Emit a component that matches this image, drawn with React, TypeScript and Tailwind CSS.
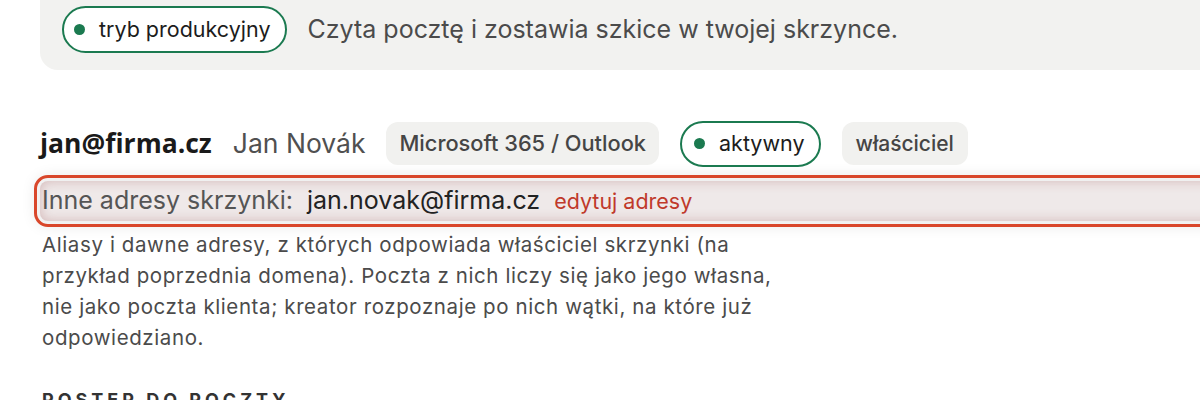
import { useState } from 'react'

function Dot() {
  return <span className="inline-block w-[11px] h-[11px] rounded-full bg-[#1b7a50] shrink-0" />
}

export default function App() {
  const [aliases] = useState(['jan.novak@firma.cz'])

  return (
    <div className="w-[1200px] h-[400px] overflow-hidden bg-white font-['Inter','Noto_Sans',sans-serif]">
      <div className="w-[1280px] pl-[40px]">
        {/* status bar */}
        <div className="h-[70px] bg-[#f2f2f0] rounded-bl-[18px] pl-[22px] pt-[6px] flex items-start gap-[20px]">
          <span className="h-[47px] flex items-center gap-[14px] pl-[10px] pr-[15px] border-2 border-[#1b7a50] rounded-full bg-white text-[21.5px] text-[#1c1c1c]">
            <Dot />
            tryb produkcyjny
          </span>
          <span className="h-[47px] flex items-center text-[25px] text-[#4b4b4b]">
            Czyta pocztę i zostawia szkice w twojej skrzynce.
          </span>
        </div>

        {/* account row */}
        <div className="mt-[50px] h-[47px] flex items-center gap-[21px]">
          <span className="font-['Open_Sans',sans-serif] font-bold text-[26.5px] text-[#1a1a1a]">jan@firma.cz</span>
          <span className="text-[26.5px] text-[#505050]">Jan Novák</span>
          <span className="h-[43px] px-[13px] flex items-center rounded-[12px] bg-[#f1f1ef] text-[21.8px] font-medium text-[#454545]">
            Microsoft 365 / Outlook
          </span>
          <span className="h-[46px] flex items-center gap-[14px] pl-[12px] pr-[14px] border-2 border-[#1b7a50] rounded-full bg-white text-[21.5px] text-[#1c1c1c]">
            <Dot />
            aktywny
          </span>
          <span className="h-[43px] px-[14px] flex items-center rounded-[12px] bg-[#f1f1ef] text-[21px] font-medium text-[#454545]">
            właściciel
          </span>
        </div>

        {/* aliases */}
        <div className="mt-[14px] h-[40px] flex items-center gap-[14px] pl-[2px] rounded-[8px] bg-[#efe9e9] outline-3 outline-[#d9472b] outline-offset-[3px] shadow-[inset_0_0_12px_rgba(150,70,70,0.3),0_0_14px_6px_rgba(0,0,0,0.08)]">
          <span className="text-[25px] text-[#555]">Inne adresy skrzynki:</span>
          {aliases.map((a) => (
            <span key={a} className="text-[25px] text-[#222]">{a}</span>
          ))}
          <a href="#" className="text-[21.5px] text-[#c0392b]">edytuj adresy</a>
        </div>

        <p className="mt-[8px] pl-[2px] max-w-[750px] text-[20.5px] tracking-[0.6px] leading-[31px] text-[#4b4b4b]">
          Aliasy i dawne adresy, z których odpowiada właściciel skrzynki (na przykład poprzednia domena). Poczta z nich liczy się jako jego własna, nie jako poczta klienta; kreator rozpoznaje po nich wątki, na które już odpowiedziano.
        </p>

        <h3 className="mt-[33px] pl-[2px] text-[18px] font-bold uppercase tracking-[4px] text-[#333]">
          Postęp do poczty
        </h3>
      </div>
    </div>
  )
}
